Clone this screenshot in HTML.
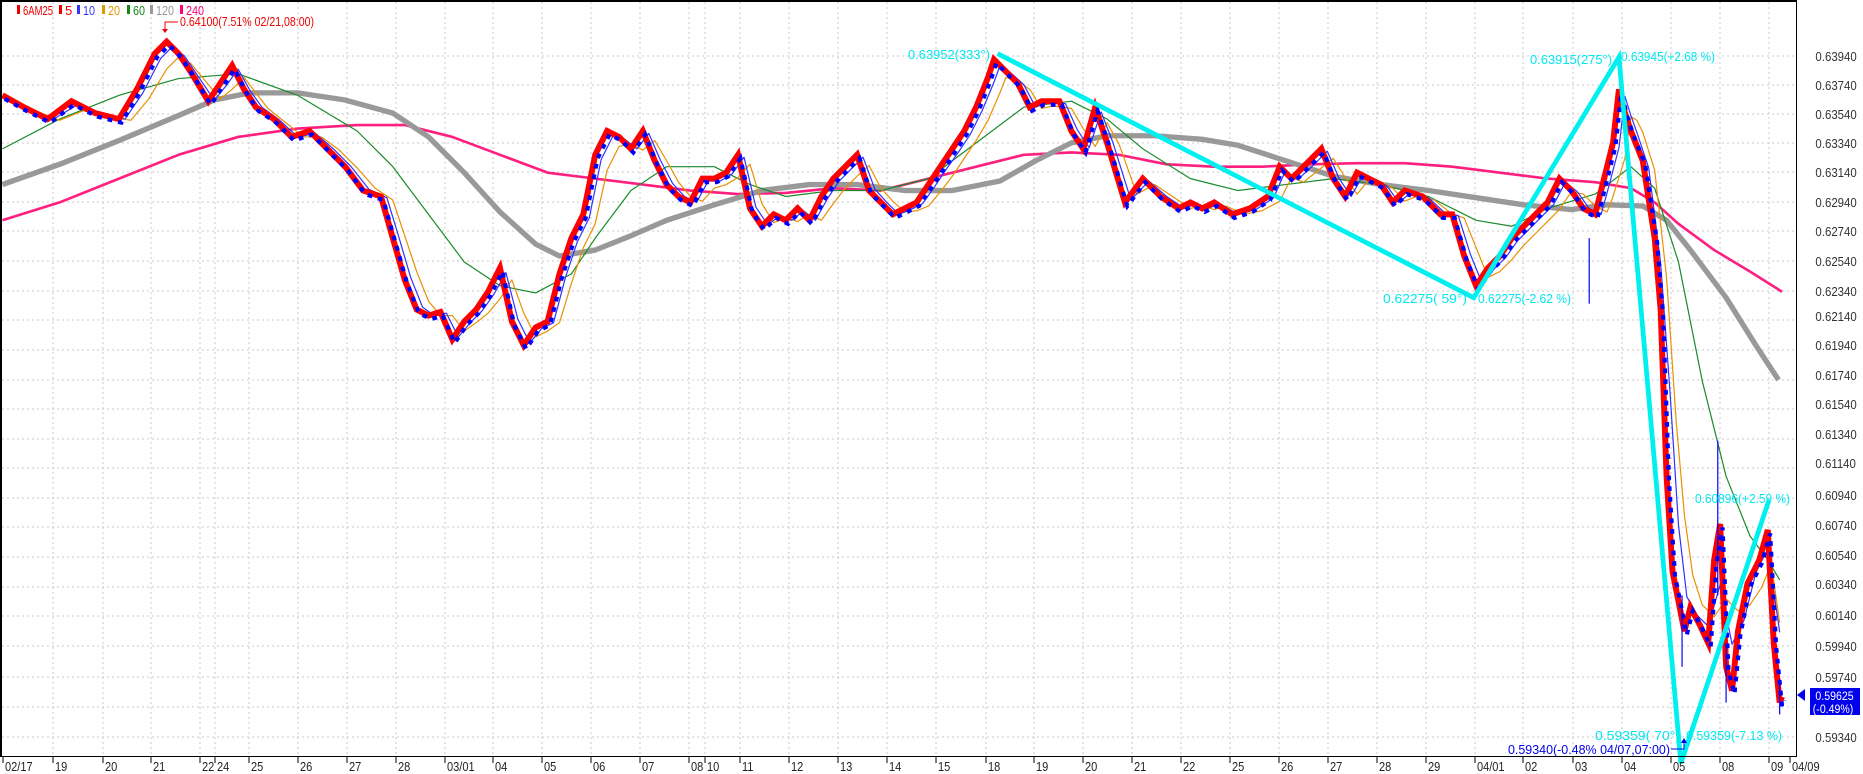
<!DOCTYPE html>
<html><head><meta charset="utf-8"><style>
html,body{margin:0;padding:0;background:#fff;width:1863px;height:774px;overflow:hidden}
svg{display:block}
text{font-family:"Liberation Sans",sans-serif;}
</style></head><body>
<svg width="1863" height="774" xmlns="http://www.w3.org/2000/svg">
<rect width="1863" height="774" fill="#fff"/>
<g stroke="#c8c8c8" stroke-dasharray="2,3" stroke-width="1">
<line x1="2" x2="1796" y1="56" y2="56"/><line x1="2" x2="1796" y1="85" y2="85"/><line x1="2" x2="1796" y1="114" y2="114"/><line x1="2" x2="1796" y1="143" y2="143"/><line x1="2" x2="1796" y1="172" y2="172"/><line x1="2" x2="1796" y1="202" y2="202"/><line x1="2" x2="1796" y1="231" y2="231"/><line x1="2" x2="1796" y1="261" y2="261"/><line x1="2" x2="1796" y1="291" y2="291"/><line x1="2" x2="1796" y1="320" y2="320"/><line x1="2" x2="1796" y1="350" y2="350"/><line x1="2" x2="1796" y1="380" y2="380"/><line x1="2" x2="1796" y1="409" y2="409"/><line x1="2" x2="1796" y1="439" y2="439"/><line x1="2" x2="1796" y1="468" y2="468"/><line x1="2" x2="1796" y1="498" y2="498"/><line x1="2" x2="1796" y1="527" y2="527"/><line x1="2" x2="1796" y1="557" y2="557"/><line x1="2" x2="1796" y1="587" y2="587"/><line x1="2" x2="1796" y1="616" y2="616"/><line x1="2" x2="1796" y1="646" y2="646"/><line x1="2" x2="1796" y1="677" y2="677"/><line x1="2" x2="1796" y1="707" y2="707"/><line x1="2" x2="1796" y1="737" y2="737"/>
<line x1="53" x2="53" y1="2" y2="756"/><line x1="103" x2="103" y1="2" y2="756"/><line x1="151" x2="151" y1="2" y2="756"/><line x1="200" x2="200" y1="2" y2="756"/><line x1="215" x2="215" y1="2" y2="756"/><line x1="249" x2="249" y1="2" y2="756"/><line x1="298" x2="298" y1="2" y2="756"/><line x1="347" x2="347" y1="2" y2="756"/><line x1="396" x2="396" y1="2" y2="756"/><line x1="445" x2="445" y1="2" y2="756"/><line x1="493" x2="493" y1="2" y2="756"/><line x1="542" x2="542" y1="2" y2="756"/><line x1="591" x2="591" y1="2" y2="756"/><line x1="640" x2="640" y1="2" y2="756"/><line x1="689" x2="689" y1="2" y2="756"/><line x1="705" x2="705" y1="2" y2="756"/><line x1="740" x2="740" y1="2" y2="756"/><line x1="789" x2="789" y1="2" y2="756"/><line x1="838" x2="838" y1="2" y2="756"/><line x1="887" x2="887" y1="2" y2="756"/><line x1="936" x2="936" y1="2" y2="756"/><line x1="986" x2="986" y1="2" y2="756"/><line x1="1034" x2="1034" y1="2" y2="756"/><line x1="1083" x2="1083" y1="2" y2="756"/><line x1="1132" x2="1132" y1="2" y2="756"/><line x1="1181" x2="1181" y1="2" y2="756"/><line x1="1230" x2="1230" y1="2" y2="756"/><line x1="1279" x2="1279" y1="2" y2="756"/><line x1="1328" x2="1328" y1="2" y2="756"/><line x1="1377" x2="1377" y1="2" y2="756"/><line x1="1426" x2="1426" y1="2" y2="756"/><line x1="1475" x2="1475" y1="2" y2="756"/><line x1="1523" x2="1523" y1="2" y2="756"/><line x1="1573" x2="1573" y1="2" y2="756"/><line x1="1622" x2="1622" y1="2" y2="756"/><line x1="1671" x2="1671" y1="2" y2="756"/><line x1="1720" x2="1720" y1="2" y2="756"/><line x1="1769" x2="1769" y1="2" y2="756"/>
</g>
<svg x="0" y="0" width="1863" height="774" viewBox="0 0 1565 650" preserveAspectRatio="none">
<g fill="none" stroke-linejoin="round">
<polyline stroke="#ff1f7f" stroke-width="2.2" points="2,185 50,170 100,150 150,130 200,115 250,108 300,105 340,105 380,115 420,130 460,145 500,150 540,155 580,160 620,163 660,162 700,158 740,160 780,150 820,140 860,130 900,128 940,130 980,138 1020,140 1060,140 1100,138 1140,137 1180,137 1220,140 1260,145 1300,150 1340,153 1370,158 1390,170 1410,188 1440,210 1470,228 1497,245"/>
<polyline stroke="#999" stroke-width="4.5" points="2,155 50,138 100,118 150,97 180,84 210,78 250,78 290,84 330,95 360,115 390,145 420,178 450,205 470,215 500,210 530,198 560,185 600,172 640,160 680,155 720,155 760,160 800,160 840,152 870,135 900,120 930,114 970,114 1010,117 1040,122 1080,135 1120,148 1160,155 1200,160 1240,166 1280,172 1320,176 1350,172 1380,173 1400,185 1420,210 1450,250 1475,290 1494,319"/>
<polyline stroke="#1a8a2a" stroke-width="1" points="2,125 50,100 100,80 150,66 200,62 250,80 300,110 330,140 360,180 390,220 420,240 450,246 480,230 500,200 530,160 560,140 600,140 630,155 660,165 700,160 740,160 780,150 820,120 860,90 900,85 930,100 960,125 1000,150 1040,160 1080,155 1120,150 1160,155 1200,165 1240,185 1270,190 1300,175 1340,163 1370,140 1390,158 1410,220 1430,320 1450,400 1470,450 1485,470 1495,487"/>
<polyline stroke="#e89000" stroke-width="1" transform="translate(10,3)" points="2,85 20,90 40,98 60,90 80,95 100,98 115,80 130,55 140,45 150,50 160,62 175,80 185,72 195,62 205,75 215,88 230,100 245,112 260,112 275,123 290,138 305,155 320,165 330,195 340,225 350,250 360,262 370,262 380,275 390,268 400,260 410,248 420,232 430,260 440,280 450,275 460,268 470,235 480,205 490,185 500,140 510,120 520,118 530,123 540,115 550,132 560,150 570,162 580,166 590,155 600,152 610,146 620,135 630,168 640,184 650,180 660,183 670,177 680,182 690,168 700,155 710,145 720,136 730,155 740,166 750,175 760,174 770,170 780,158 790,145 800,130 810,115 820,98 830,75 835,62 845,65 855,72 865,88 875,86 890,88 900,105 910,120 920,100 930,118 945,160 960,152 975,162 990,172 1000,170 1010,173 1020,170 1035,177 1050,174 1065,166 1075,146 1085,150 1100,138 1110,130 1120,146 1130,160 1140,148 1150,150 1160,155 1170,166 1180,162 1195,165 1210,177 1220,180 1230,205 1240,230 1250,225 1260,215 1270,203 1280,193 1290,183 1300,173 1310,158 1320,160 1330,170 1340,175 1345,162 1355,130 1360,95 1365,98 1370,108 1380,140 1390,230 1398,350 1405,430 1412,480 1420,505 1430,515 1440,500 1450,510 1460,505 1470,490 1478,470 1485,520"/>
<polyline stroke="#3030ff" stroke-width="1" transform="translate(5,1)" points="2,82 20,90 40,99 60,87 80,95 100,99 115,77 130,48 140,38 150,46 160,61 175,83 185,71 195,57 205,75 215,89 230,100 245,114 260,111 275,124 290,139 305,158 320,165 330,198 340,232 350,257 360,264 370,262 380,282 390,270 400,260 410,246 420,228 430,267 440,287 450,275 460,270 470,232 480,202 490,182 500,133 510,113 520,116 530,124 540,111 550,134 560,153 570,164 580,169 590,151 600,151 610,145 620,131 630,173 640,188 650,180 660,184 670,176 680,184 690,166 700,151 710,141 720,131 730,158 740,169 750,179 760,175 770,170 780,156 790,141 800,127 810,112 820,92 830,68 835,54 845,61 855,70 865,89 875,85 890,86 900,108 910,123 920,93 930,119 945,167 960,151 975,164 990,174 1000,170 1010,174 1020,170 1035,179 1050,175 1065,165 1075,142 1085,150 1100,136 1110,126 1120,149 1130,164 1140,146 1150,150 1160,155 1170,169 1180,161 1195,165 1210,179 1220,180 1230,212 1240,237 1250,225 1260,215 1270,201 1280,191 1290,181 1300,171 1310,152 1320,160 1330,174 1340,179 1345,161 1355,123 1360,80 1365,96 1370,110 1380,140 1390,220 1398,330 1405,440 1412,500 1420,515 1430,525 1440,490 1450,540 1460,520 1470,480 1480,460 1490,530"/>
</g>
<g fill="none" stroke-linejoin="miter">
<polyline stroke="#ff0000" stroke-width="5" points="2,80 20,90 40,100 60,85 80,95 100,100 115,75 130,45 140,35 150,45 160,60 175,85 185,70 195,55 205,75 215,90 230,100 245,115 260,110 275,125 290,140 305,160 320,165 330,200 340,235 350,260 360,265 370,262 380,285 390,270 400,260 410,245 420,225 430,270 440,290 450,275 460,270 470,230 480,200 490,180 500,130 510,110 520,115 530,125 540,110 550,135 560,155 570,165 580,170 590,150 600,150 610,145 620,130 630,175 640,190 650,180 660,185 670,175 680,185 690,165 700,150 710,140 720,130 730,160 740,170 750,180 760,175 770,170 780,155 790,140 800,125 810,110 820,90 830,65 835,50 845,60 855,70 865,90 875,85 890,85 900,110 910,125 920,90 930,120 945,170 960,150 975,165 990,175 1000,170 1010,175 1020,170 1035,180 1050,175 1065,165 1075,140 1085,150 1100,135 1110,125 1120,150 1130,165 1140,145 1150,150 1160,155 1170,170 1180,160 1195,165 1210,180 1220,180 1230,215 1240,240 1250,225 1260,215 1270,200 1280,190 1290,180 1300,170 1310,150 1320,160 1330,175 1340,180 1345,160 1355,120 1360,75 1365,95 1370,110 1380,135 1390,200 1395,260 1400,400 1405,480 1410,505 1415,530 1420,510 1428,525 1435,540 1440,470 1445,440 1450,560 1455,580 1460,530 1468,490 1478,470 1485,445 1490,540 1495,590 1497,585"/>
<polyline stroke="#0000ff" stroke-width="3.5" stroke-dasharray="4,5" transform="translate(2,3)" points="2,80 20,90 40,100 60,85 80,95 100,100 115,75 130,45 140,35 150,45 160,60 175,85 185,70 195,55 205,75 215,90 230,100 245,115 260,110 275,125 290,140 305,160 320,165 330,200 340,235 350,260 360,265 370,262 380,285 390,270 400,260 410,245 420,225 430,270 440,290 450,275 460,270 470,230 480,200 490,180 500,130 510,110 520,115 530,125 540,110 550,135 560,155 570,165 580,170 590,150 600,150 610,145 620,130 630,175 640,190 650,180 660,185 670,175 680,185 690,165 700,150 710,140 720,130 730,160 740,170 750,180 760,175 770,170 780,155 790,140 800,125 810,110 820,90 830,65 835,50 845,60 855,70 865,90 875,85 890,85 900,110 910,125 920,90 930,120 945,170 960,150 975,165 990,175 1000,170 1010,175 1020,170 1035,180 1050,175 1065,165 1075,140 1085,150 1100,135 1110,125 1120,150 1130,165 1140,145 1150,150 1160,155 1170,170 1180,160 1195,165 1210,180 1220,180 1230,215 1240,240 1250,225 1260,215 1270,200 1280,190 1290,180 1300,170 1310,150 1320,160 1330,175 1340,180 1345,160 1355,120 1360,75 1365,95 1370,110 1380,135 1390,200 1395,260 1400,400 1405,480 1410,505 1415,530 1420,510 1428,525 1435,540 1440,470 1445,440 1450,560 1455,580 1460,530 1468,490 1478,470 1485,445 1490,540 1495,590 1497,585"/>
</g>
<g stroke="#0000ff" stroke-width="1">
<line x1="1335" y1="255" x2="1335" y2="200"/><line x1="1443" y1="500" x2="1443" y2="370"/><line x1="1413" y1="560" x2="1413" y2="500"/><line x1="1495" y1="600" x2="1495" y2="570"/><line x1="1450" y1="590" x2="1450" y2="540"/>
</g>
<polyline fill="none" stroke="#00f0f0" stroke-width="4" points="838,45 1238,250 1360,48 1412,641 1486,420"/>
</svg>
<line x1="1" y1="0" x2="1" y2="756" stroke="#000" stroke-width="2"/>
<line x1="0" y1="1" x2="1797" y2="1" stroke="#000" stroke-width="2"/>
<line x1="1796.5" y1="0" x2="1796.5" y2="756" stroke="#000"/>
<line x1="0" y1="756.5" x2="1797" y2="756.5" stroke="#000"/>
<g stroke="#000"><line x1="3" y1="757" x2="3" y2="763"/><line x1="53" y1="757" x2="53" y2="763"/><line x1="103" y1="757" x2="103" y2="763"/><line x1="151" y1="757" x2="151" y2="763"/><line x1="200" y1="757" x2="200" y2="763"/><line x1="215" y1="757" x2="215" y2="763"/><line x1="249" y1="757" x2="249" y2="763"/><line x1="298" y1="757" x2="298" y2="763"/><line x1="347" y1="757" x2="347" y2="763"/><line x1="396" y1="757" x2="396" y2="763"/><line x1="445" y1="757" x2="445" y2="763"/><line x1="493" y1="757" x2="493" y2="763"/><line x1="542" y1="757" x2="542" y2="763"/><line x1="591" y1="757" x2="591" y2="763"/><line x1="640" y1="757" x2="640" y2="763"/><line x1="689" y1="757" x2="689" y2="763"/><line x1="705" y1="757" x2="705" y2="763"/><line x1="740" y1="757" x2="740" y2="763"/><line x1="789" y1="757" x2="789" y2="763"/><line x1="838" y1="757" x2="838" y2="763"/><line x1="887" y1="757" x2="887" y2="763"/><line x1="936" y1="757" x2="936" y2="763"/><line x1="986" y1="757" x2="986" y2="763"/><line x1="1034" y1="757" x2="1034" y2="763"/><line x1="1083" y1="757" x2="1083" y2="763"/><line x1="1132" y1="757" x2="1132" y2="763"/><line x1="1181" y1="757" x2="1181" y2="763"/><line x1="1230" y1="757" x2="1230" y2="763"/><line x1="1279" y1="757" x2="1279" y2="763"/><line x1="1328" y1="757" x2="1328" y2="763"/><line x1="1377" y1="757" x2="1377" y2="763"/><line x1="1426" y1="757" x2="1426" y2="763"/><line x1="1475" y1="757" x2="1475" y2="763"/><line x1="1523" y1="757" x2="1523" y2="763"/><line x1="1573" y1="757" x2="1573" y2="763"/><line x1="1622" y1="757" x2="1622" y2="763"/><line x1="1671" y1="757" x2="1671" y2="763"/><line x1="1720" y1="757" x2="1720" y2="763"/><line x1="1769" y1="757" x2="1769" y2="763"/><line x1="1790" y1="757" x2="1790" y2="763"/></g>
<g font-size="13" fill="#222" transform="scale(0.85,1)">
<text x="5.9" y="771">02/17</text><text x="64.7" y="771">19</text><text x="123.5" y="771">20</text><text x="180" y="771">21</text><text x="237.6" y="771">22</text><text x="255.3" y="771">24</text><text x="295.3" y="771">25</text><text x="352.9" y="771">26</text><text x="410.6" y="771">27</text><text x="468.2" y="771">28</text><text x="525.9" y="771">03/01</text><text x="582.4" y="771">04</text><text x="640" y="771">05</text><text x="697.6" y="771">06</text><text x="755.3" y="771">07</text><text x="812.9" y="771">08</text><text x="831.8" y="771">10</text><text x="872.9" y="771">11</text><text x="930.6" y="771">12</text><text x="988.2" y="771">13</text><text x="1045.9" y="771">14</text><text x="1103.5" y="771">15</text><text x="1162.4" y="771">18</text><text x="1218.8" y="771">19</text><text x="1276.5" y="771">20</text><text x="1334.1" y="771">21</text><text x="1391.8" y="771">22</text><text x="1449.4" y="771">25</text><text x="1507.1" y="771">26</text><text x="1564.7" y="771">27</text><text x="1622.4" y="771">28</text><text x="1680" y="771">29</text><text x="1737.6" y="771">04/01</text><text x="1794.1" y="771">02</text><text x="1852.9" y="771">03</text><text x="1910.6" y="771">04</text><text x="1968.2" y="771">05</text><text x="2025.9" y="771">08</text><text x="2083.5" y="771">09</text><text x="2108.2" y="771">04/09</text></g>
<g font-size="13" fill="#333" transform="scale(0.88,1)">
<text x="2063" y="61">0.63940</text><text x="2063" y="90">0.63740</text><text x="2063" y="119">0.63540</text><text x="2063" y="148">0.63340</text><text x="2063" y="177">0.63140</text><text x="2063" y="207">0.62940</text><text x="2063" y="236">0.62740</text><text x="2063" y="266">0.62540</text><text x="2063" y="296">0.62340</text><text x="2063" y="321">0.62140</text><text x="2063" y="350">0.61940</text><text x="2063" y="380">0.61740</text><text x="2063" y="409">0.61540</text><text x="2063" y="439">0.61340</text><text x="2063" y="468">0.61140</text><text x="2063" y="500">0.60940</text><text x="2063" y="530">0.60740</text><text x="2063" y="560">0.60540</text><text x="2063" y="589">0.60340</text><text x="2063" y="620">0.60140</text><text x="2063" y="651">0.59940</text><text x="2063" y="682">0.59740</text><text x="2063" y="742">0.59340</text></g>
<rect x="1810" y="688" width="50" height="27" fill="#0000ee"/>
<g font-size="12" fill="#fff" transform="scale(0.88,1)"><text x="2063" y="700">0.59625</text><text x="2060" y="713">(-0.49%)</text></g>
<polygon points="1797,695 1805,689 1805,701" fill="#0000ee"/>
<g font-size="13">
<rect x="17" y="5" width="3" height="9" fill="#e00"/><text x="23" y="15" fill="#e00" textLength="30" lengthAdjust="spacingAndGlyphs">6AM25</text>
<rect x="59" y="5" width="3" height="9" fill="#e00"/><text x="65" y="15" fill="#e00">5</text>
<rect x="77" y="5" width="3" height="9" fill="#33f"/><text x="83" y="15" fill="#33f" textLength="12" lengthAdjust="spacingAndGlyphs">10</text>
<rect x="102" y="5" width="3" height="9" fill="#d90"/><text x="108" y="15" fill="#d90" textLength="12" lengthAdjust="spacingAndGlyphs">20</text>
<rect x="127" y="5" width="3" height="9" fill="#181"/><text x="133" y="15" fill="#181" textLength="12" lengthAdjust="spacingAndGlyphs">60</text>
<rect x="150" y="5" width="3" height="9" fill="#999"/><text x="156" y="15" fill="#999" textLength="18" lengthAdjust="spacingAndGlyphs">120</text>
<rect x="180" y="5" width="3" height="9" fill="#f07"/><text x="186" y="15" fill="#f07" textLength="18" lengthAdjust="spacingAndGlyphs">240</text>
<text x="180" y="26" fill="#e00" textLength="134" lengthAdjust="spacingAndGlyphs">0.64100(7.51% 02/21,08:00)</text>
</g>
<polyline points="165,30 165,22 178,22" fill="none" stroke="#e00"/><polygon points="162,29 168,29 165,33" fill="#e00"/>
<g font-size="13" fill="#00e8f0">
<text x="908" y="59" textLength="82" lengthAdjust="spacingAndGlyphs">0.63952(333°)</text>
<text x="1530" y="64" textLength="82" lengthAdjust="spacingAndGlyphs">0.63915(275°)</text>
<text x="1621" y="61" textLength="94" lengthAdjust="spacingAndGlyphs">0.63945(+2.68 %)</text>
<text x="1383" y="303" textLength="84" lengthAdjust="spacingAndGlyphs">0.62275( 59°)</text>
<text x="1478" y="303" textLength="93" lengthAdjust="spacingAndGlyphs">0.62275(-2.62 %)</text>
<text x="1695" y="503" textLength="95" lengthAdjust="spacingAndGlyphs">0.60896(+2.59 %)</text>
<text x="1595" y="740" textLength="85" lengthAdjust="spacingAndGlyphs">0.59359( 70°)</text>
<text x="1686" y="740" textLength="96" lengthAdjust="spacingAndGlyphs">0.59359(-7.13 %)</text>
</g>
<text x="1508" y="754" font-size="13" fill="#0000ee" textLength="162" lengthAdjust="spacingAndGlyphs">0.59340(-0.48% 04/07,07:00)</text>
<polyline points="1671,749 1684,749 1684,742" fill="none" stroke="#0000ee"/><polygon points="1681,743 1687,743 1684,738" fill="#0000ee"/>
</svg>
</body></html>
